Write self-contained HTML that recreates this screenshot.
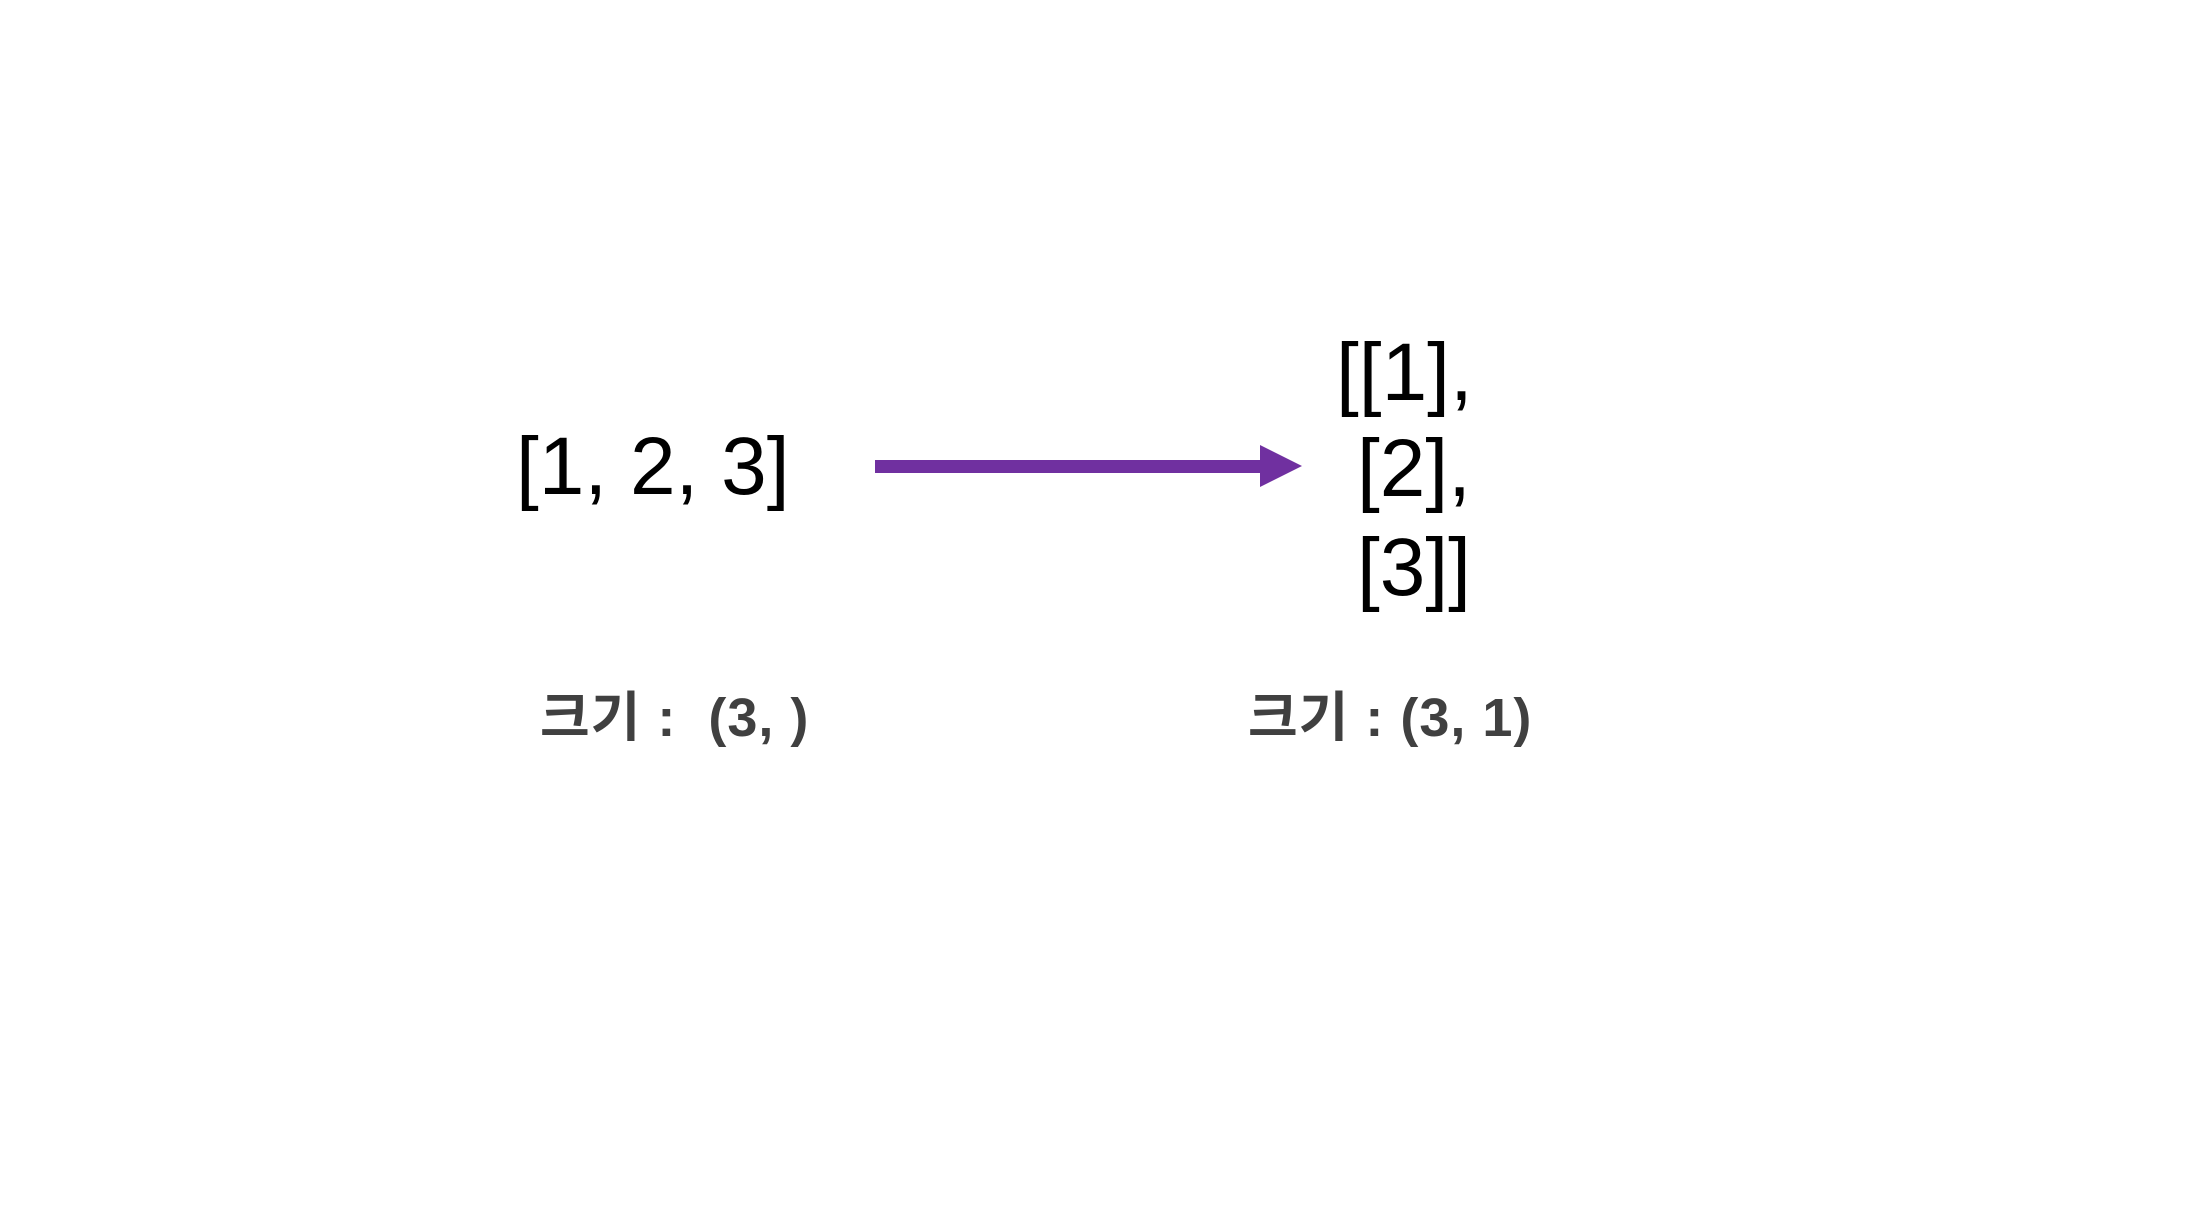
<!DOCTYPE html>
<html><head><meta charset="utf-8"><style>
html,body{margin:0;padding:0;background:#fff;}
body{width:2201px;height:1223px;position:relative;overflow:hidden;font-family:"Liberation Sans","Noto Sans CJK KR",sans-serif;}
.t{position:absolute;font-size:82px;line-height:82px;color:#000;white-space:pre;}
.l{position:absolute;font-size:54px;line-height:54px;font-weight:bold;color:#404040;white-space:pre;letter-spacing:1px;}
</style></head><body>
<div class="t" style="left:516px;top:426px;">[1, 2, 3]</div>
<div class="t" style="left:1336px;top:332px;">[[1],</div>
<div class="t" style="left:1357px;top:428px;">[2],</div>
<div class="t" style="left:1357px;top:527px;">[3]]</div>
<svg style="position:absolute;left:0;top:0" width="2201" height="1223">
<rect x="875" y="460" width="388" height="13" fill="#7030A0"/>
<polygon points="1260,445 1302,466 1260,487" fill="#7030A0"/>
</svg>
<div class="l" style="left:540px;top:691px;">크기 :  (3, )</div>
<div class="l" style="left:1248px;top:691px;">크기 : (3, 1)</div>
</body></html>
